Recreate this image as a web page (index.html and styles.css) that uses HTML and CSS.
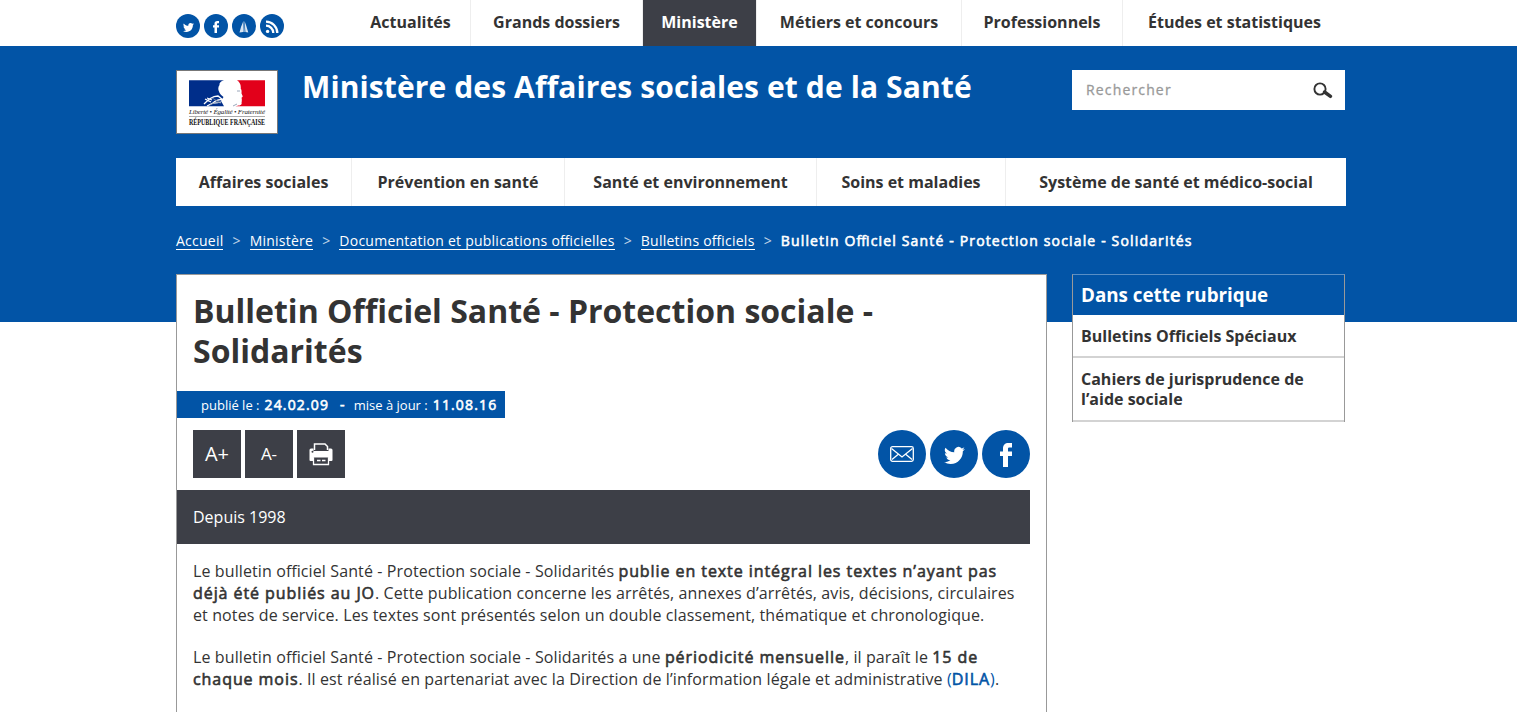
FILE: index.html
```html
<!DOCTYPE html>
<html lang="fr">
<head>
<meta charset="utf-8">
<title>Bulletin Officiel Santé - Protection sociale - Solidarités</title>
<link rel="stylesheet" href="styles.css">
</head>
<body>
<svg class="defs" width="0" height="0">
  <symbol id="bird" viewBox="0 0 24 24"><path d="M23.9 4.6a10 10 0 0 1-2.8.8 5 5 0 0 0 2.2-2.7 10 10 0 0 1-3.1 1.2 4.9 4.9 0 0 0-8.4 4.5C7.7 8.2 4.1 6.200 1.700 3.200a4.900 4.900 0 0 0 1.500 6.500 4.900 4.900 0 0 1-2.200-.6c0 2.400 1.700 4.400 3.900 4.900a5 5 0 0 1-2.200.1 4.900 4.900 0 0 0 4.600 3.400A9.900 9.900 0 0 1 0 19.500a14 14 0 0 0 7.500 2.200c9.100 0 14.300-7.700 14-14.600a10 10 0 0 0 2.400-2.500z"/></symbol>
  <symbol id="fb" viewBox="0 0 12 24"><path d="M12 0v4.500H9.300C8.300 4.500 8 5 8 6v2.500h4V13H8v11H3V13H0V8.500h3V5.500C3 2 5 0 8.500 0z"/></symbol>
</svg>
<div class="page">
  <div class="topbar">
    <div class="social">
      <a class="dot"><svg width="11" height="11"><use href="#bird"/></svg></a>
      <a class="dot"><svg width="6" height="12"><use href="#fb"/></svg></a>
      <a class="dot"><svg class="sail" width="12" height="12" viewBox="0 0 12 12"><path d="M5.400 0 5 11 1.500 11.500 3 6zM6.500 0 8 4 10.300 11.500 7.400 11z" opacity=".85"/><path d="M6 0 7 11 4.800 11z" opacity=".5"/></svg></a>
      <a class="dot"><svg class="rss" width="14" height="14" viewBox="0 0 14 14"><circle cx="2.600" cy="11.400" r="1.700"/><path d="M1 5.700a7.300 7.300 0 0 1 7.300 7.300M1 1.700A11.300 11.300 0 0 1 12.300 13"/></svg></a>
    </div>
    <nav class="topnav">
      <a class="t1">Actualités</a><a class="t2">Grands dossiers</a><a class="t3 active">Ministère</a><a class="t4">Métiers et concours</a><a class="t5">Professionnels</a><a class="t6">Études et statistiques</a>
    </nav>
  </div>
  <header class="header">
    <svg class="logo" width="102" height="64" viewBox="0 0 102 64">
      <rect x=".5" y=".5" width="101" height="63" fill="#fff" stroke="#777"/>
      <path d="M13 10.300h35c-3 1-5 2.500-4.500 4.700-1.500 2-1.500 4.500-.5 6.500.5 2 2.500 4 4.500 5.500L45 31l3 5.300H13z" fill="#002e8a"/>
      <path d="M61 10.300h28v26H59.500c3-.8 6-.5 6.200-3-.5-1.300.5-2 0-3.300.5-1-.4-1.500 0-2.500 1.800-.5.700-2-.2-4 0-2 .5-3-.8-5 .5-3.500-1-6.500-3.700-8.200z" fill="#e2001a"/>
      <path d="M28 34c4-4 8-8 14-8l5 4c-4-1-7 0-10 3 3 0 5 0 8-1M29 29l6 3m-4-4 5 2m-5 6 6-3" fill="none" stroke="#fff" stroke-width="1.300"/>
      <path d="M34 35l6-3 5 1m-9-5 7 4m18-11 3 0m-3 13-4 2" fill="none" stroke="#8090a8" stroke-width=".8"/>
      <text x="13" y="43.500" class="motto" textLength="76">Liberté • Égalité • Fraternité</text>
      <path d="M13 46.500h76" stroke="#888" stroke-width=".7"/>
      <text x="13" y="54.500" class="republic" textLength="76" lengthAdjust="spacingAndGlyphs">RÉPUBLIQUE FRANÇAISE</text>
    </svg>
    <div class="site">Ministère des Affaires sociales et de la Santé</div>
    <div class="search"><span>Rechercher</span>
      <svg width="20" height="17" viewBox="0 0 20 17"><circle cx="7" cy="7" r="5.600" fill="none" stroke="#333" stroke-width="1.900"/><path d="M11.500 10 17.500 14.300" stroke="#333" stroke-width="3.500" stroke-linecap="round"/></svg>
    </div>
  </header>
  <nav class="mainnav">
    <a class="m1">Affaires sociales</a><a class="m2">Prévention en santé</a><a class="m3">Santé et environnement</a><a class="m4">Soins et maladies</a><a class="m5">Système de santé et médico-social</a>
  </nav>
  <div class="crumbs">
    <a>Accueil</a><i>&gt;</i><a>Ministère</a><i>&gt;</i><a>Documentation et publications officielles</a><i>&gt;</i><a>Bulletins officiels</a><i>&gt;</i><strong>Bulletin Officiel Santé - Protection sociale - Solidarités</strong>
  </div>
  <div class="columns">
    <main class="article">
      <h1>Bulletin Officiel Santé - Protection sociale - Solidarités</h1>
      <div class="dates"><span>publié le :</span><strong>24.02.09</strong><strong class="dash">-</strong><span>mise à jour :</span><strong>11.08.16</strong></div>
      <div class="tools">
        <a class="tool plus">A+</a><a class="tool minus">A-</a>
        <a class="tool"><svg width="24" height="24" viewBox="0 0 24 24"><path d="M5.500 8V2h10.500l2.500 2.500V8" fill="none" stroke="#fff" stroke-width="1.500"/><path d="M2 6.500h2.500V9h15V6.500H22q1.500 0 1.500 1.500v10q0 1-1 1h-3.300v-3.500H4.800V19H1.500q-1 0-1-1V8q0-1.500 1.500-1.500z" fill="#fff"/><circle cx="3.500" cy="9.800" r="1" fill="#3d3f47"/><path d="M4.500 15.500v7h15v-7M8 18.500h3.500m1.500 0h3.500" fill="none" stroke="#fff" stroke-width="1.300"/></svg></a>
        <div class="share">
          <a><svg class="mail" width="24" height="16" viewBox="0 0 24 16"><rect x=".7" y=".7" width="22.600" height="14.600" rx="1.800"/><path d="M1.500 2.500 12 11 22.500 2.500M2 13.500l6-5M22 13.500l-6-5"/></svg></a>
          <a><svg class="big-bird" width="21" height="21"><use href="#bird"/></svg></a>
          <a><svg class="big-fb" width="12" height="24"><use href="#fb"/></svg></a>
        </div>
      </div>
      <div class="lead">Depuis 1998</div>
      <p>Le bulletin officiel Santé - Protection sociale - Solidarités <strong>publie en texte intégral les textes n’ayant pas<br>déjà été publiés au JO</strong>. Cette publication concerne les arrêtés, annexes d’arrêtés, avis, décisions, circulaires<br>et notes de service. Les textes sont présentés selon un double classement, thématique et chronologique.</p>
      <p>Le bulletin officiel Santé - Protection sociale - Solidarités a une <strong>périodicité mensuelle</strong>, il paraît le <strong>15 de<br>chaque mois</strong>. Il est réalisé en partenariat avec la Direction de l’information légale et administrative <a>(<strong>DILA</strong>)</a>.</p>
    </main>
    <aside class="rubric">
      <h2>Dans cette rubrique</h2>
      <a>Bulletins Officiels Spéciaux</a>
      <a class="two">Cahiers de jurisprudence de<br>l’aide sociale</a>
    </aside>
  </div>
</div>
</body>
</html>
```
FILE: styles.css
```css
* { box-sizing: border-box; }
html { height: 712px; overflow: hidden; }
body {
  margin: 0;
  height: 712px;
  overflow: hidden;
  font: 16px/22px "Open Sans", sans-serif;
  font-feature-settings: "liga";
  color: #333;
  background: linear-gradient(#fff 46px, #0254a6 46px, #0254a6 322px, #fff 322px) no-repeat;
}
.defs { display: block; height: 0; }
.page { width: 1170px; margin-left: 176px; }
svg { fill: #fff; flex: none; }

.topbar { display: flex; height: 46px; }
.social { display: flex; gap: 4px; width: 175px; padding-top: 14px; }
.dot { display: flex; align-items: center; justify-content: center; width: 24px; height: 24px; border-radius: 50%; background: #0254a6; }
.dot svg { margin-top: 2px; }
.rss path { fill: none; stroke: #fff; stroke-width: 2.300; }
.topnav, .mainnav { display: flex; font-weight: 700; white-space: nowrap; }
.topnav a { border-right: 1px solid #eee; text-align: center; line-height: 44px; height: 46px; }
.topnav a:last-child, .mainnav a:last-child { border-right: 0; }
.topnav .active { color: #fff; background: #3d3f47; }
.t1 { width: 120px; } .t2 { width: 172px; } .t3 { width: 114px; } .t4 { width: 205px; } .t5 { width: 161px; } .t6 { width: 223px; }

.header { display: flex; height: 112px; padding-top: 24px; }
.motto { font: italic 7px "Liberation Serif", serif; fill: #222; }
.republic { font: bold 7.500px "Liberation Serif", serif; fill: #111; }
.site { width: 770px; margin-left: 24px; font-size: 30px; line-height: 34px; font-weight: 700; letter-spacing: .11px; color: #fff; white-space: nowrap; }
.search { display: flex; align-items: center; justify-content: space-between; width: 273px; height: 40px; padding: 0 12px 0 14px; background: #fff; color: #999; font-size: 14px; letter-spacing: 1.150px; -webkit-text-stroke: .3px #999; }

.mainnav { background: #fff; height: 48px; line-height: 48px; }
.mainnav a { border-right: 1px solid #eee; text-align: center; }
.m1 { width: 176px; } .m2 { width: 213px; } .m3 { width: 252px; } .m4 { width: 189px; } .m5 { width: 340px; }

.crumbs { display: flex; align-items: flex-start; height: 68px; padding-top: 26px; color: #fff; font-size: 14px; line-height: 17px; white-space: nowrap; }
.crumbs a { border-bottom: 1px solid #fff; letter-spacing: .240px; }
.crumbs i { width: 26.200px; text-align: center; font-style: normal; opacity: .75; }
strong { font-weight: 400; letter-spacing: .930px; -webkit-text-stroke: .6px currentColor; }
.crumbs strong { letter-spacing: 1.160px; }

.columns { display: flex; justify-content: space-between; align-items: flex-start; padding-right: 1px; }
.article { width: 871px; height: 460px; padding-top: 16px; background: #fff; border: 1px solid #999; }
h1 { margin: 0 16px; width: 740px; font-size: 32px; line-height: 40px; }
.dates { display: flex; align-items: center; width: 328px; height: 27px; margin-top: 20px; padding-left: 24px; background: #0254a6; color: #fff; font-size: 13px; white-space: nowrap; }
.dates strong { font-size: 14px; margin-left: 5px; letter-spacing: 1.150px; }
.dates .dash { margin: 0 8px 0 11px; }
.tools { display: flex; gap: 4px; height: 72px; padding: 12px 16px; }
.tool { display: flex; align-items: center; justify-content: center; width: 48px; height: 48px; background: #3d3f47; color: #fff; }
.plus { font-size: 20px; }
.minus { font-size: 17px; }
.share { display: flex; gap: 4px; margin-left: auto; }
.share a { display: flex; align-items: center; justify-content: center; width: 48px; height: 48px; border-radius: 50%; background: #0254a6; }
.share .big-bird { margin-top: 2px; }
.share .big-fb { margin-right: 1px; margin-top: 1px; }
.mail { fill: none; stroke: #fff; stroke-width: 1.300; }
.lead { width: 853px; height: 54px; line-height: 54px; padding-left: 16px; background: #3d3f47; color: #fff; }
.article p { margin: 16px 0 20px 16px; white-space: nowrap; letter-spacing: .110px; }
.article p a { color: #0254a6; }

.rubric { width: 273px; border: 1px solid #999; border-top-color: #5a8fc5; border-bottom: 0; background: #fff; font-weight: 700; line-height: 20px; }
.rubric h2 { margin: 0; height: 40px; padding-left: 8px; font-size: 18.800px; line-height: 40px; color: #fff; background: #0254a6; }
.rubric a { display: block; padding: 11px 8px 10px; border-bottom: 2px solid #d3d3d3; }
.rubric .two { padding: 11px 8px; }
```
